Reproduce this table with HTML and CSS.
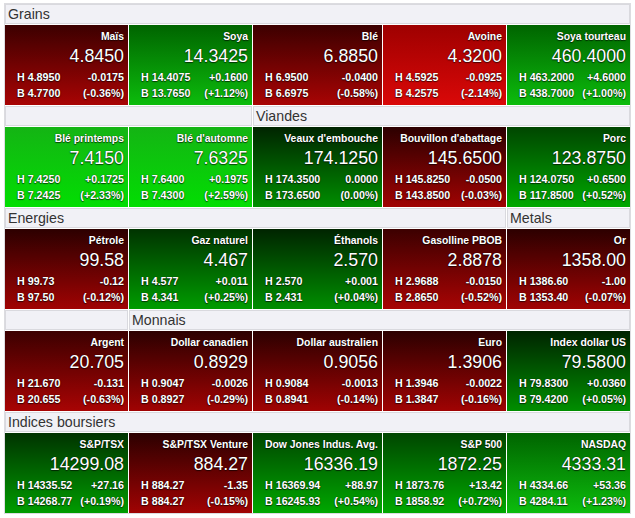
FILE: index.html
```html
<!DOCTYPE html>
<html lang="fr">
<head>
<meta charset="utf-8">
<title>Marchés</title>
<link rel="stylesheet" href="styles.css">
</head>
<body>
<div class="board">
  <div class="head span5">Grains</div>
  <div class="cell dn2"><div class="name">Maïs</div><div class="price">4.8450</div><div class="row"><span>H 4.8950</span><span>-0.0175</span></div><div class="row"><span>B 4.7700</span><span>(-0.36%)</span></div></div>
  <div class="cell up3"><div class="name">Soya</div><div class="price">14.3425</div><div class="row"><span>H 14.4075</span><span>+0.1600</span></div><div class="row"><span>B 13.7650</span><span>(+1.12%)</span></div></div>
  <div class="cell dn2"><div class="name">Blé</div><div class="price">6.8850</div><div class="row"><span>H 6.9500</span><span>-0.0400</span></div><div class="row"><span>B 6.6975</span><span>(-0.58%)</span></div></div>
  <div class="cell dn4"><div class="name">Avoine</div><div class="price">4.3200</div><div class="row"><span>H 4.5925</span><span>-0.0925</span></div><div class="row"><span>B 4.2575</span><span>(-2.14%)</span></div></div>
  <div class="cell up3"><div class="name">Soya tourteau</div><div class="price">460.4000</div><div class="row"><span>H 463.2000</span><span>+4.6000</span></div><div class="row"><span>B 438.7000</span><span>(+1.00%)</span></div></div>

  <div class="head span2"></div>
  <div class="head span3">Viandes</div>
  <div class="cell up4"><div class="name">Blé printemps</div><div class="price">7.4150</div><div class="row"><span>H 7.4250</span><span>+0.1725</span></div><div class="row"><span>B 7.2425</span><span>(+2.33%)</span></div></div>
  <div class="cell up4"><div class="name">Blé d'automne</div><div class="price">7.6325</div><div class="row"><span>H 7.6400</span><span>+0.1975</span></div><div class="row"><span>B 7.4300</span><span>(+2.59%)</span></div></div>
  <div class="cell up0"><div class="name">Veaux d'embouche</div><div class="price">174.1250</div><div class="row"><span>H 174.3500</span><span>0.0000</span></div><div class="row"><span>B 173.6500</span><span>(0.00%)</span></div></div>
  <div class="cell dn1"><div class="name">Bouvillon d'abattage</div><div class="price">145.6500</div><div class="row"><span>H 145.8250</span><span>-0.0500</span></div><div class="row"><span>B 143.8500</span><span>(-0.03%)</span></div></div>
  <div class="cell up2"><div class="name">Porc</div><div class="price">123.8750</div><div class="row"><span>H 124.0750</span><span>+0.6500</span></div><div class="row"><span>B 117.8500</span><span>(+0.52%)</span></div></div>

  <div class="head span4">Energies</div>
  <div class="head">Metals</div>
  <div class="cell dn1"><div class="name">Pétrole</div><div class="price">99.58</div><div class="row"><span>H 99.73</span><span>-0.12</span></div><div class="row"><span>B 97.50</span><span>(-0.12%)</span></div></div>
  <div class="cell up1"><div class="name">Gaz naturel</div><div class="price">4.467</div><div class="row"><span>H 4.577</span><span>+0.011</span></div><div class="row"><span>B 4.341</span><span>(+0.25%)</span></div></div>
  <div class="cell up0"><div class="name">Éthanols</div><div class="price">2.570</div><div class="row"><span>H 2.570</span><span>+0.001</span></div><div class="row"><span>B 2.431</span><span>(+0.04%)</span></div></div>
  <div class="cell dn2"><div class="name">Gasolline PBOB</div><div class="price">2.8878</div><div class="row"><span>H 2.9688</span><span>-0.0150</span></div><div class="row"><span>B 2.8650</span><span>(-0.52%)</span></div></div>
  <div class="cell dn1"><div class="name">Or</div><div class="price">1358.00</div><div class="row"><span>H 1386.60</span><span>-1.00</span></div><div class="row"><span>B 1353.40</span><span>(-0.07%)</span></div></div>

  <div class="head"></div>
  <div class="head span4">Monnais</div>
  <div class="cell dn2"><div class="name">Argent</div><div class="price">20.705</div><div class="row"><span>H 21.670</span><span>-0.131</span></div><div class="row"><span>B 20.655</span><span>(-0.63%)</span></div></div>
  <div class="cell dn1"><div class="name">Dollar canadien</div><div class="price">0.8929</div><div class="row"><span>H 0.9047</span><span>-0.0026</span></div><div class="row"><span>B 0.8927</span><span>(-0.29%)</span></div></div>
  <div class="cell dn1"><div class="name">Dollar australien</div><div class="price">0.9056</div><div class="row"><span>H 0.9084</span><span>-0.0013</span></div><div class="row"><span>B 0.8941</span><span>(-0.14%)</span></div></div>
  <div class="cell dn1"><div class="name">Euro</div><div class="price">1.3906</div><div class="row"><span>H 1.3946</span><span>-0.0022</span></div><div class="row"><span>B 1.3847</span><span>(-0.16%)</span></div></div>
  <div class="cell up0"><div class="name">Index dollar US</div><div class="price">79.5800</div><div class="row"><span>H 79.8300</span><span>+0.0360</span></div><div class="row"><span>B 79.4200</span><span>(+0.05%)</span></div></div>

  <div class="head span5">Indices boursiers</div>
  <div class="cell up1"><div class="name">S&amp;P/TSX</div><div class="price">14299.08</div><div class="row"><span>H 14335.52</span><span>+27.16</span></div><div class="row"><span>B 14268.77</span><span>(+0.19%)</span></div></div>
  <div class="cell dn1"><div class="name">S&amp;P/TSX Venture</div><div class="price">884.27</div><div class="row"><span>H 884.27</span><span>-1.35</span></div><div class="row"><span>B 884.27</span><span>(-0.15%)</span></div></div>
  <div class="cell up2"><div class="name">Dow Jones Indus. Avg.</div><div class="price">16336.19</div><div class="row"><span>H 16369.94</span><span>+88.97</span></div><div class="row"><span>B 16245.93</span><span>(+0.54%)</span></div></div>
  <div class="cell up2"><div class="name">S&amp;P 500</div><div class="price">1872.25</div><div class="row"><span>H 1873.76</span><span>+13.42</span></div><div class="row"><span>B 1858.92</span><span>(+0.72%)</span></div></div>
  <div class="cell up3"><div class="name">NASDAQ</div><div class="price">4333.31</div><div class="row"><span>H 4334.66</span><span>+53.36</span></div><div class="row"><span>B 4284.11</span><span>(+1.23%)</span></div></div>
</div>
</body>
</html>
```

FILE: styles.css
```css
html, body {
  margin: 0;
  padding: 0;
  background: #ffffff;
}

body {
  font-family: "Liberation Sans", Arial, Helvetica, sans-serif;
}

.board {
  margin: 3px 4px 0 4px;
  border: 1px solid #dcdce0;
  display: grid;
  grid-template-columns: repeat(5, 1fr);
  grid-auto-rows: auto;
  gap: 1px;
  background: #ffffff;
}

.head {
  box-sizing: border-box;
  height: 20px;
  border: 1px solid #d9d9de;
  background: #f1f1f6;
  color: #333333;
  font-size: 14.2px;
  line-height: 18px;
  padding-left: 2px;
  white-space: nowrap;
}

.span2 { grid-column: span 2; }
.span3 { grid-column: span 3; }
.span4 { grid-column: span 4; }
.span5 { grid-column: span 5; }

.cell {
  box-sizing: border-box;
  height: 80px;
  padding: 5px 4px 0 12px;
  color: #ffffff;
  text-shadow: 0 0 1px rgba(0, 0, 0, 0.8), 0 1px 1px rgba(0, 0, 0, 0.6);
  white-space: nowrap;
}

.name {
  text-align: right;
  font-size: 10.4px;
  font-weight: bold;
  line-height: 14px;
}

.price {
  text-align: right;
  font-size: 17.8px;
  line-height: 25px;
}

.row {
  display: flex;
  justify-content: space-between;
  font-size: 10.7px;
  font-weight: bold;
  line-height: 16px;
}

/* change intensity colours */
.dn1 { background: linear-gradient(to bottom, #2c0000, #a00303); }
.dn2 { background: linear-gradient(to bottom, #3c0000, #a80404); }
.dn4 { background: linear-gradient(to bottom, #9e0000, #da0808); }

.up0 { background: linear-gradient(to bottom, #002400, #008e00); }
.up1 { background: linear-gradient(to bottom, #003300, #009c00); }
.up2 { background: linear-gradient(to bottom, #004600, #00a800); }
.up3 { background: linear-gradient(to bottom, #006400, #0cbc0c); }
.up4 { background: linear-gradient(to bottom, #14b414, #02de02); }
```
